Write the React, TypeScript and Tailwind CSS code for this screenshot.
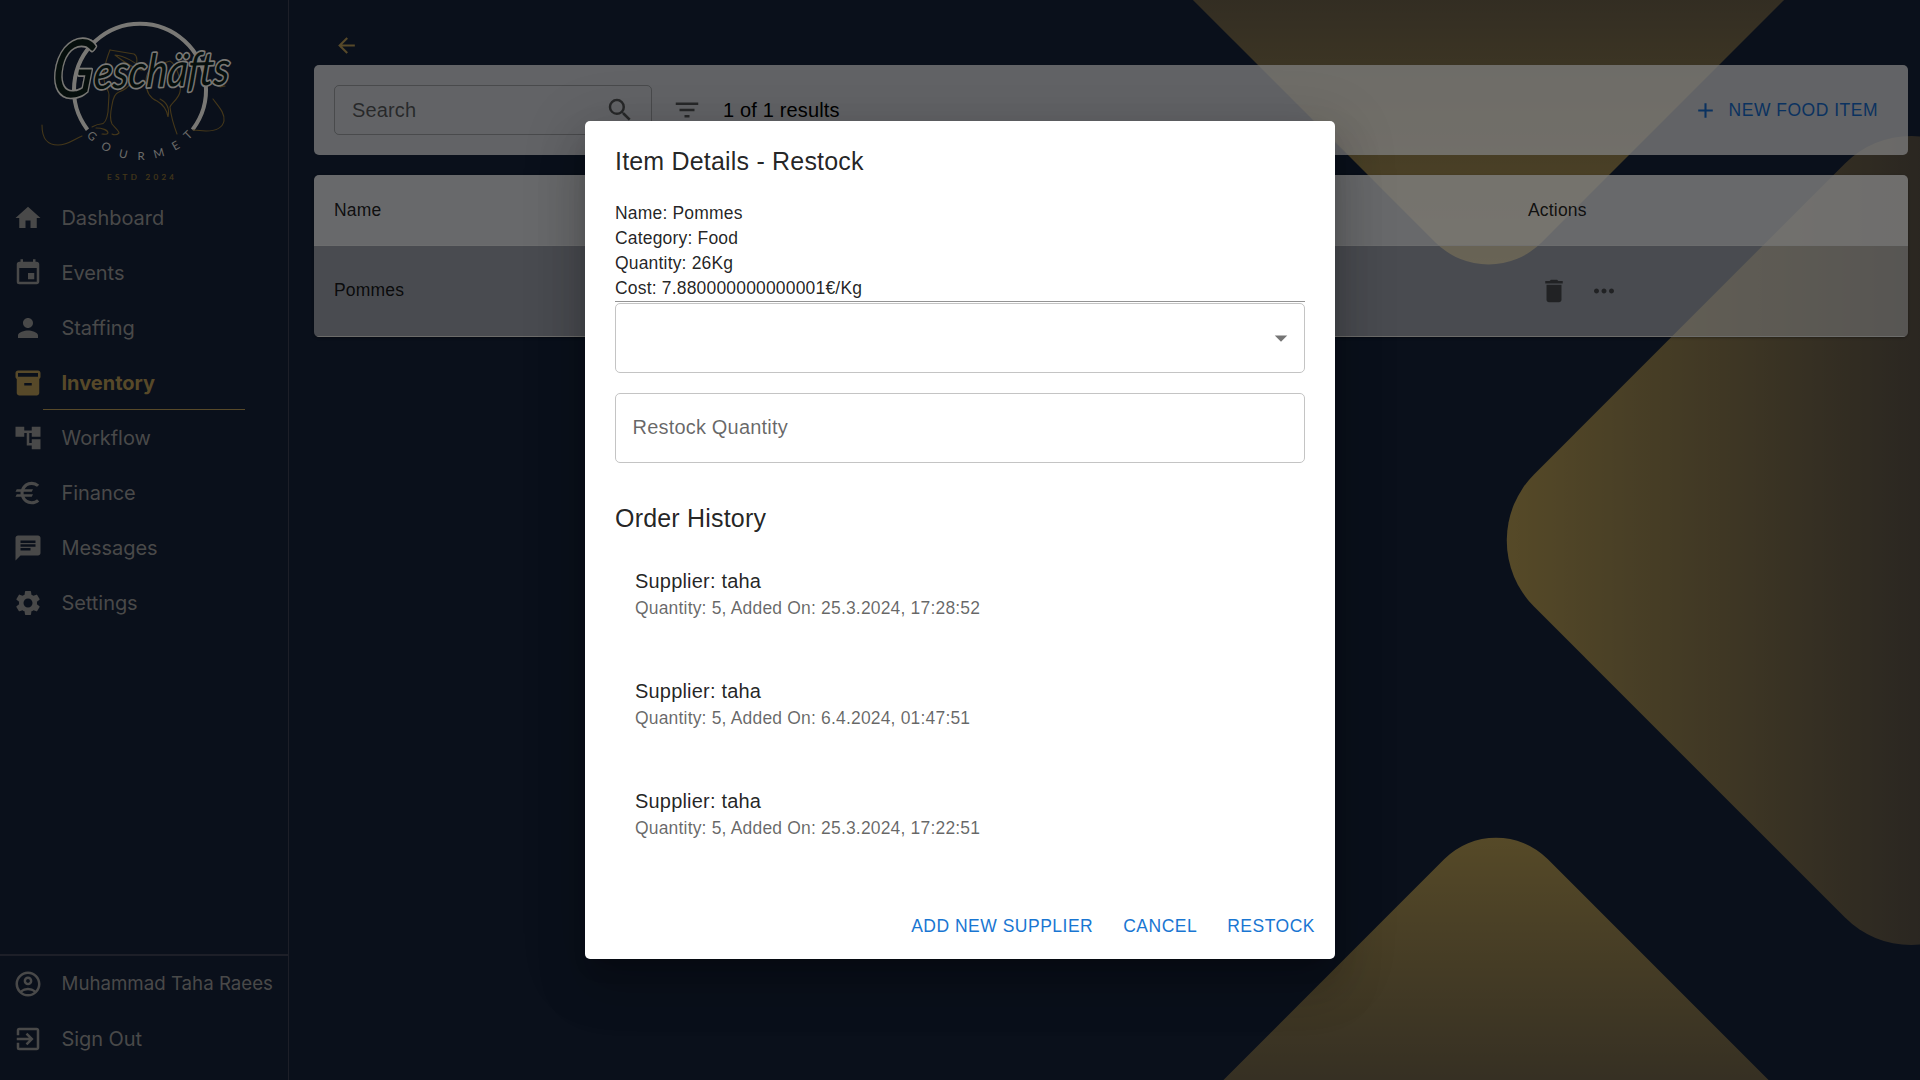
import type { ReactNode } from "react";
import type { IconType } from "react-icons";
import {
  MdHome,
  MdEvent,
  MdPerson,
  MdInventory2,
  MdAccountTree,
  MdEuro,
  MdChat,
  MdSettings,
  MdOutlineAccountCircle,
  MdExitToApp,
  MdArrowBack,
  MdSearch,
  MdFilterList,
  MdAdd,
  MdDelete,
  MdMoreHoriz,
  MdArrowDropDown,
} from "react-icons/md";

const arial = "font-['Liberation_Sans',Arial,sans-serif]";

type NavEntry = { label: string; icon: IconType; active?: boolean; compact?: boolean };

const navEntries: NavEntry[] = [
  { label: "Dashboard", icon: MdHome },
  { label: "Events", icon: MdEvent },
  { label: "Staffing", icon: MdPerson },
  { label: "Inventory", icon: MdInventory2, active: true },
  { label: "Workflow", icon: MdAccountTree },
  { label: "Finance", icon: MdEuro },
  { label: "Messages", icon: MdChat },
  { label: "Settings", icon: MdSettings },
];

const accountEntries: NavEntry[] = [
  { label: "Muhammad Taha Raees", icon: MdOutlineAccountCircle, compact: true },
  { label: "Sign Out", icon: MdExitToApp },
];

const details = ["Name: Pommes", "Category: Food", "Quantity: 26Kg", "Cost: 7.880000000000001€/Kg"];

const orders = [
  "Quantity: 5, Added On: 25.3.2024, 17:28:52",
  "Quantity: 5, Added On: 6.4.2024, 01:47:51",
  "Quantity: 5, Added On: 25.3.2024, 17:22:51",
];

const arcLetters = [
  { ch: "G", x: 92, y: 136, r: 42 },
  { ch: "O", x: 106.3, y: 147, r: 28 },
  { ch: "U", x: 123.3, y: 154, r: 13 },
  { ch: "R", x: 141, y: 156.2, r: 0 },
  { ch: "M", x: 159, y: 153.3, r: -15 },
  { ch: "E", x: 175.6, y: 145.6, r: -30 },
  { ch: "T", x: 188, y: 135, r: -44 },
];

/** Rounded diamonds behind the whole page. */
function Backdrop() {
  return (
    <svg className="absolute inset-0" width="1920" height="1080" viewBox="0 0 1920 1080" aria-hidden="true">
      <defs>
        <linearGradient id="gold" x1="0" y1="0" x2="1" y2="1">
          <stop offset="0" stopColor="#b49a51" />
          <stop offset="0.5" stopColor="#574f43" />
          <stop offset="1" stopColor="#000635" />
        </linearGradient>
      </defs>
      <rect x="-250" y="-250" width="500" height="500" rx="75" fill="url(#gold)" transform="translate(1488.5 -58) rotate(225)" />
      <rect x="-313.5" y="-313.5" width="627" height="627" rx="93.75" fill="url(#gold)" transform="translate(1911.3 540.5) rotate(-45)" />
      <rect x="-250" y="-250" width="500" height="500" rx="73" fill="url(#gold)" transform="translate(1496 1161) rotate(45)" />
    </svg>
  );
}

function Logo() {
  return (
    <svg width="288" height="190" viewBox="0 0 288 190" className="shrink-0">
      <path d="M87.5 129.700 A66 66 0 1 1 192.500 129.700" fill="none" stroke="#f3f1ea" strokeWidth="4" />
      <g fill="none" stroke="#8a6f33" strokeWidth="1.1" strokeLinecap="round">
        <path d="M42 125 C42 140 48 145 58 145 C68 145 74 139 82 136" />
        <path d="M110 50 L134 54 C138 56 137 62 136 69 C134 80 130 88 119 92 C116 93 113 98 112 105 C110 114 110 120 112 124 C115 128 119 131 119 133 C117 135 114 135 112 134" />
        <path d="M110 50 C106 60 102 74 105 84 C107 90 109 91 109 95 L108 112 C107 119 105 124 101 124 C97 124 94 126 92 127 M96 128 C102 128 108 130 108 133 C107 135 104 134 102 134" />
        <path d="M115 55 C124 56 136 62 144 70 C136 70 124 62 115 55" />
        <path d="M158 65 L170 61 C177 65 182 82 180 92 C178 100 171 103 170 107 C171 116 174 126 177 134" />
        <path d="M158 65 C150 67 146 72 146 82 C146 92 150 98 157 101 C164 105 167 110 168 117 C170 108 166 102 160 99" />
        <path d="M213 99 C219 107 225 113 224 121 C222 130 212 131 206 131 L193 130" />
        <path d="M220 87 L225 86" />
      </g>
      <g
        fontFamily="Lato, sans-serif"
        fontStyle="italic"
        fontWeight="400"
        fill="#0c1f1a"
        stroke="#f3f1ea"
        strokeLinejoin="round"
        paintOrder="stroke"
      >
        <text transform="translate(50 97) skewX(-6)" fontSize="80" strokeWidth="3.4" textLength="42" lengthAdjust="spacingAndGlyphs">
          G
        </text>
        <text transform="translate(93 89) rotate(-2) skewX(-6)" fontSize="46" strokeWidth="3.4" textLength="136" lengthAdjust="spacingAndGlyphs">
          eschäfts
        </text>
      </g>
      <g fontFamily="Lato, sans-serif" fontSize="11.500" fill="#d6d6d2" textAnchor="middle">
        {arcLetters.map((l) => (
          <text key={l.ch} transform={`translate(${l.x} ${l.y}) rotate(${l.r})`} y="4">
            {l.ch}
          </text>
        ))}
      </g>
      <text x="107" y="180" fontFamily="Lato, sans-serif" fontSize="8" fill="#8a7033" stroke="#8a7033" strokeWidth="0.2" textLength="67">
        ESTD 2024
      </text>
    </svg>
  );
}

function NavLabel({ label, active, compact }: { label: string; active?: boolean; compact?: boolean }) {
  if (active) return <span className="ml-[18.5px] text-[20px] font-bold whitespace-nowrap">{label}</span>;
  if (compact) return <span className="ml-[18.5px] text-[18.7px] font-normal whitespace-nowrap">{label}</span>;
  return <span className="ml-[18.5px] text-[20px] font-normal tracking-[-0.06px] whitespace-nowrap">{label}</span>;
}

function NavItem({ label, icon: Icon, active, compact }: NavEntry) {
  return (
    <div className={active ? "flex h-[55px] flex-col text-[#ae9252]" : "flex h-[55px] flex-col text-[#929292]"}>
      <div className="flex h-[54px] shrink-0 items-center pl-[13px]">
        <Icon size={30} className="shrink-0" />
        <NavLabel label={label} active={active} compact={compact} />
      </div>
      {active && <div className="-mt-px ml-[43px] h-px w-[202px] bg-[#ae9252]" />}
    </div>
  );
}

function Sidebar() {
  return (
    <aside className="flex w-[289px] shrink-0 flex-col border-r border-[#3b3f50] font-[Inter,sans-serif]">
      <Logo />
      <nav className="pt-px">
        {navEntries.map((e) => (
          <NavItem key={e.label} {...e} />
        ))}
      </nav>
      <div className="mt-auto border-t-2 border-[#3b3f50] pt-[1px] pb-[13px]">
        {accountEntries.map((e) => (
          <NavItem key={e.label} {...e} />
        ))}
      </div>
    </aside>
  );
}

function Inventory() {
  return (
    <main className={`${arial} flex grow flex-col pr-[12px] pl-[25px]`}>
      <div className="flex h-[65px] shrink-0 items-end pb-[7px] pl-[20px]">
        <MdArrowBack size={25} className="text-[#ae9252]" />
      </div>
      <section className="flex h-[90px] shrink-0 items-center rounded-[5px] bg-white/75 px-5">
        <div className="flex h-[50px] w-[318px] items-center justify-between rounded-[5px] border border-black/25 pr-[16px] pl-[17px] text-black/60">
          <span className="text-[20px] tracking-[0.15px]">Search</span>
          <MdSearch size={30} />
        </div>
        <MdFilterList size={30} className="ml-5 text-black/60" />
        <span className="ml-[21px] text-[20px] tracking-[0.15px] text-black">1 of 1 results</span>
        <div className="mr-[10px] ml-auto flex items-center text-[17.5px] tracking-[0.5px] text-[#1565c0]">
          <MdAdd size={25} />
          <span className="ml-[11px]">NEW FOOD ITEM</span>
        </div>
      </section>
      <section className="mt-5 shrink-0 overflow-hidden rounded-[5px] text-[17.5px] tracking-[0.18px] text-black/87 shadow-[0_1px_3px_rgba(0,0,0,0.3)]">
        <div className="flex h-[71px] items-center border-b border-[#dcdcdc]/60 bg-white/80">
          <span className="w-[1194px] pl-5">Name</span>
          <span className="pl-5">Actions</span>
        </div>
        <div className="flex h-[91px] items-center border-b border-[#d8d8d4] bg-[#eeeeee]/58">
          <span className="w-[1194px] pb-[2px] pl-5">Pommes</span>
          <div className="flex items-center gap-5 pl-[31px] text-black/54">
            <MdDelete size={30} />
            <MdMoreHoriz size={30} />
          </div>
        </div>
      </section>
    </main>
  );
}

function DialogButton({ children }: { children: ReactNode }) {
  return <button className="px-[10px] py-[7px] text-[17.5px] leading-[31px] tracking-[0.5px] text-[#1976d2]">{children}</button>;
}

function RestockDialog() {
  return (
    <div
      className={`${arial} flex h-[838px] w-[750px] flex-col rounded-[5px] bg-white text-black/87 shadow-[0_14px_19px_-9px_rgba(0,0,0,0.2),0_30px_48px_4px_rgba(0,0,0,0.14),0_11px_58px_10px_rgba(0,0,0,0.12)]`}
    >
      <h2 className="px-[30px] pt-[20px] pb-[20px] text-[25px] leading-[40px] tracking-[0.19px]">Item Details - Restock</h2>
      <div className="flex flex-col px-[30px]">
        {details.map((d) => (
          <p key={d} className="text-[17.5px] leading-[25px] tracking-[0.18px]">
            {d}
          </p>
        ))}
        <div className="h-px bg-[#949494]" />
        <div className="mt-[1px] flex h-[70px] items-center justify-end rounded-[5px] border border-[#c4c4c4] pr-[8px]">
          <MdArrowDropDown size={30} className="text-black/54" />
        </div>
        <div className="mt-5 flex h-[70px] items-center rounded-[5px] border border-[#c4c4c4] px-[16.500px] pb-[2px] text-[20px] tracking-[0.19px] text-black/60">
          Restock Quantity
        </div>
        <h3 className="mt-[35px] text-[25px] leading-[40px] tracking-[0.19px]">Order History</h3>
        <ul className="mt-[28px] flex flex-col gap-[55px] pl-5">
          {orders.map((o) => (
            <li key={o} className="h-[55px]">
              <p className="text-[20px] leading-[30px] tracking-[0.19px]">Supplier: taha</p>
              <p className="text-[17.5px] leading-[25px] tracking-[0.18px] text-black/60">{o}</p>
            </li>
          ))}
        </ul>
      </div>
      <div className="mt-auto flex justify-end gap-[10px] p-[10px]">
        <DialogButton>ADD NEW SUPPLIER</DialogButton>
        <DialogButton>CANCEL</DialogButton>
        <DialogButton>RESTOCK</DialogButton>
      </div>
    </div>
  );
}

export default function App() {
  return (
    <div className="relative h-[1080px] w-[1920px] overflow-hidden bg-[#142036]">
      <Backdrop />
      <div className="relative flex h-full">
        <Sidebar />
        <Inventory />
      </div>
      <div className="absolute inset-0 flex items-center justify-center bg-black/50">
        <RestockDialog />
      </div>
    </div>
  );
}
